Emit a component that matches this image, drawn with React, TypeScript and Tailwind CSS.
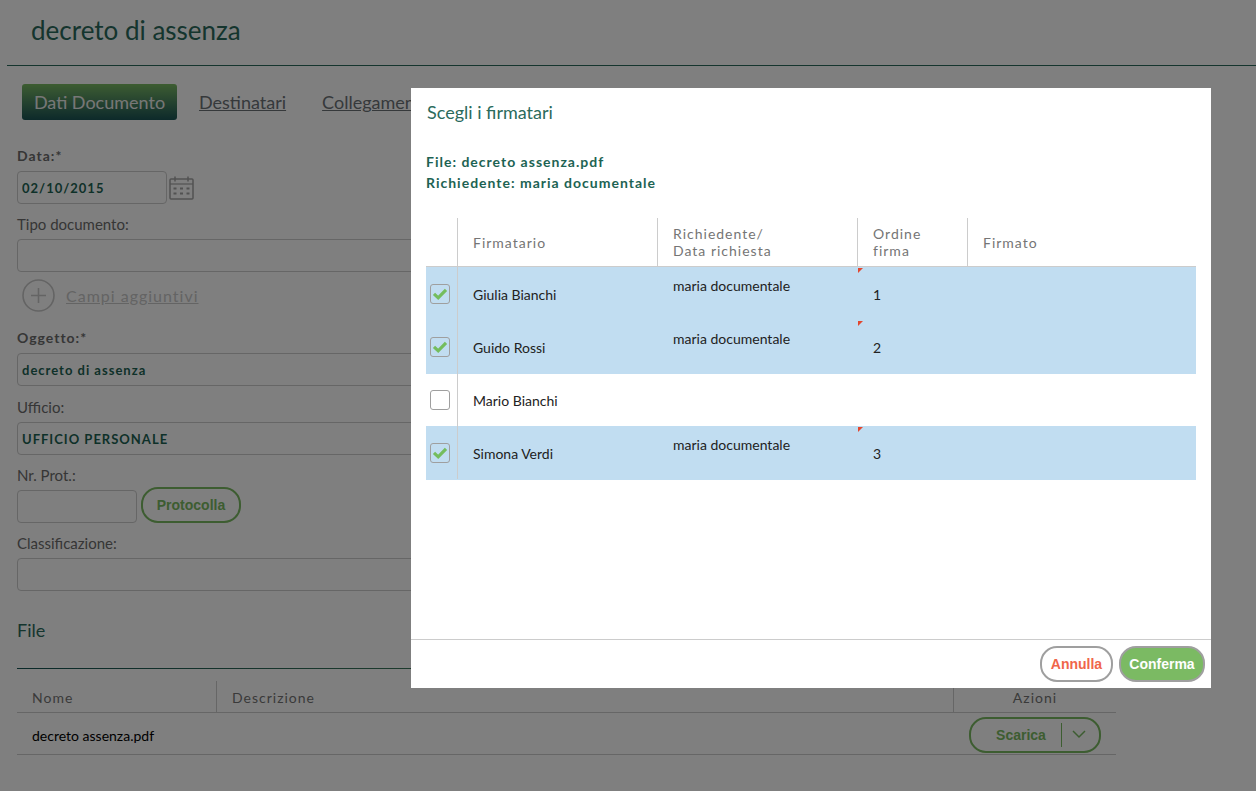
import React, { ChangeEvent, FC, ReactNode, useState } from 'react'

interface IFirmatario {
  id: number;
  nome: string;
  richiedente: string;
  ordine: string;
  scelto: boolean;
}

const elenco: IFirmatario[] = [
  { id: 1, nome: 'Giulia Bianchi', richiedente: 'maria documentale', ordine: '1', scelto: true },
  { id: 2, nome: 'Guido Rossi', richiedente: 'maria documentale', ordine: '2', scelto: true },
  { id: 3, nome: 'Mario Bianchi', richiedente: '', ordine: '', scelto: false },
  { id: 4, nome: 'Simona Verdi', richiedente: 'maria documentale', ordine: '3', scelto: true },
]

const inputClass = 'block h-[33px] rounded border border-[#ccc] bg-white px-1 text-[13px] font-bold tracking-[1px] text-[#1d6353]'
const buttonClass = "h-9 rounded-[17px] border-2 font-['Liberation_Sans',sans-serif] text-sm font-bold"

const CalendarIcon = () => (
  <svg width="26" height="24" viewBox="0 0 26 24" fill="none" stroke="#a4a4a4" aria-hidden="true">
    <rect x="1" y="3" width="23" height="20" rx="1" strokeWidth="1.5" />
    <path d="M1 8h23" strokeWidth="1.2" />
    <path d="M6 .5v5M19 .5v5" strokeWidth="1.5" />
    <path d="M4.500 12.500h3M11 12.500h3M17.500 12.500h3M4.500 17.500h3M11 17.500h3M17.500 17.500h3" strokeWidth="2" />
  </svg>
)

const PlusIcon = () => (
  <svg width="33" height="33" viewBox="0 0 33 33" fill="none" stroke="#c8c8c8" strokeWidth="1.6" aria-hidden="true">
    <circle cx="16.500" cy="16.500" r="15.500" />
    <path d="M9 16.500h15M16.500 9v15" />
  </svg>
)

interface FieldProps {
  id: string;
  label: string;
  required?: boolean;
  children: ReactNode;
}

const Field: FC<FieldProps> = ({ id, label, required, children }) => (
  <div>
    <label
      htmlFor={id}
      className={required
        ? 'mb-[5px] block text-sm leading-5 font-bold tracking-[1px] text-[#6c6c6c]'
        : 'mb-[5px] block text-[15px] leading-5 text-[#6c6c6c]'}
    >
      {label}
    </label>
    {children}
  </div>
)

const DocumentForm = () => {
  const [data, setData] = useState<string>('02/10/2015')
  const [oggetto, setOggetto] = useState<string>('decreto di assenza')
  const [ufficio, setUfficio] = useState<string>('UFFICIO PERSONALE')

  return (
    <form className="flex flex-col" onSubmit={(e) => e.preventDefault()}>
      <Field id="data" label="Data:*" required>
        <div className="flex items-center gap-0.5">
          <input
            id="data"
            type="text"
            value={data}
            className={`${inputClass} w-[150px]`}
            onChange={(e: ChangeEvent<HTMLInputElement>) => setData(e.target.value)}
          />
          <button type="button" aria-label="Apri calendario"><CalendarIcon /></button>
        </div>
      </Field>
      <div className="mt-2.5">
        <Field id="tipo" label="Tipo documento:">
          <input id="tipo" type="text" className={`${inputClass} w-full`} />
        </Field>
      </div>
      <a href="#campi" className="mt-[7px] ml-[5px] flex items-center gap-[11px] self-start text-base tracking-[1px] text-[#c8c8c8] underline">
        <PlusIcon />
        Campi aggiuntivi
      </a>
      <div className="mt-4">
        <Field id="oggetto" label="Oggetto:*" required>
          <input
            id="oggetto"
            type="text"
            value={oggetto}
            className={`${inputClass} w-full`}
            onChange={(e: ChangeEvent<HTMLInputElement>) => setOggetto(e.target.value)}
          />
        </Field>
      </div>
      <div className="mt-[11px]">
        <Field id="ufficio" label="Ufficio:">
          <input
            id="ufficio"
            type="text"
            value={ufficio}
            className={`${inputClass} w-full`}
            onChange={(e: ChangeEvent<HTMLInputElement>) => setUfficio(e.target.value)}
          />
        </Field>
      </div>
      <div className="mt-2.5">
        <Field id="prot" label="Nr. Prot.:">
          <div className="flex h-[33px] items-end gap-1">
            <input id="prot" type="text" className={`${inputClass} w-[120px]`} />
            <button type="button" className={`${buttonClass} w-[100px] border-[#7bba63] text-[#7bba63]`}>
              Protocolla
            </button>
          </div>
        </Field>
      </div>
      <div className="mt-2.5">
        <Field id="classificazione" label="Classificazione:">
          <input id="classificazione" type="text" className={`${inputClass} w-full`} />
        </Field>
      </div>
    </form>
  )
}

const FileTable = () => (
  <table className="mt-3 w-full table-fixed border-separate border-spacing-0 text-left">
    <colgroup>
      <col className="w-[200px]" />
      <col />
      <col className="w-[162px]" />
    </colgroup>
    <thead>
      <tr className="h-8 text-sm tracking-[1px] text-[#757575]">
        <th className="border-r border-b border-[#ccc] px-[15px] pt-0.5 font-normal">Nome</th>
        <th className="border-r border-b border-[#ccc] px-[15px] pt-0.5 font-normal">Descrizione</th>
        <th className="border-b border-[#ccc] pt-0.5 text-center font-normal">Azioni</th>
      </tr>
    </thead>
    <tbody>
      <tr className="h-[42px] text-sm">
        <td className="border-b border-[#ccc] px-[15px] pt-1">decreto assenza.pdf</td>
        <td className="border-b border-[#ccc]"></td>
        <td className="border-b border-[#ccc] pt-0.5 pl-[15px]">
          <div className="flex h-9 w-[132px] items-center rounded-[17px] border-2 border-[#7bba63] text-[#7bba63]">
            <button type="button" className="flex-1 pl-2.5 font-['Liberation_Sans',sans-serif] text-sm font-bold">
              Scarica
            </button>
            <button type="button" aria-label="Altre azioni" className="flex h-6 w-[38px] items-center border-l border-[#7bba63] pl-2.5">
              <svg width="14" height="9" viewBox="0 0 14 9" fill="none" stroke="currentColor" strokeWidth="1.5" aria-hidden="true">
                <path d="M1 1l6 6 6-6" />
              </svg>
            </button>
          </div>
        </td>
      </tr>
    </tbody>
  </table>
)

const FirmatariDialog = () => {
  const [firmatari, setFirmatari] = useState<IFirmatario[]>(elenco)

  const toggle = (id: number) => {
    setFirmatari(firmatari.map((f) => f.id === id ? { ...f, scelto: !f.scelto } : f))
  }

  return (
    <div role="dialog" aria-modal="true" aria-labelledby="titolo" className="flex min-h-[600px] w-full max-w-[800px] flex-col bg-white">
      <h2 id="titolo" className="px-4 pt-3 text-lg leading-6 text-[#2b6b5c]">Scegli i firmatari</h2>
      <div className="flex-1 px-[15px] pt-[27px]">
        <p className="text-sm leading-[21px] font-bold tracking-[1px] text-[#1d6353]">File: decreto assenza.pdf</p>
        <p className="text-sm leading-[21px] font-bold tracking-[1px] text-[#1d6353]">Richiedente: maria documentale</p>
        <table className="mt-[25px] w-full table-fixed border-separate border-spacing-0 text-left">
          <colgroup>
            <col className="w-8" />
            <col className="w-[200px]" />
            <col className="w-[200px]" />
            <col className="w-[110px]" />
            <col />
          </colgroup>
          <thead>
            <tr className="h-[49px] text-sm leading-[17px] tracking-[1px] text-[#757575]">
              <th className="border-r border-b border-[#ccc]"></th>
              <th className="border-r border-b border-[#ccc] px-[15px] font-normal">Firmatario</th>
              <th className="border-r border-b border-[#ccc] px-[15px] font-normal">Richiedente/<br />Data richiesta</th>
              <th className="border-r border-b border-[#ccc] px-[15px] font-normal">Ordine<br />firma</th>
              <th className="border-b border-[#ccc] px-[15px] font-normal">Firmato</th>
            </tr>
          </thead>
          <tbody>
            {firmatari.map((f) => (
              <tr key={f.id} className={f.scelto ? 'h-[53px] bg-[#c1ddf1] text-sm text-[#222] shadow-[0_1px_#c1ddf1]' : 'h-[53px] text-sm text-[#222]'}>
                <td className="border-r border-[#ccc]">
                  <div className="relative ml-1 size-5">
                    <input
                      type="checkbox"
                      id={`firmatario-${f.id}`}
                      checked={f.scelto}
                      className="block size-5 appearance-none rounded-[3px] border border-[#9f9f9f]"
                      onChange={() => toggle(f.id)}
                    />
                    {f.scelto && (
                      <svg className="pointer-events-none absolute inset-0" width="20" height="20" viewBox="0 0 20 20" fill="none" stroke="#74bd5d" strokeWidth="3.200" aria-hidden="true">
                        <path d="M4 9.800l4.200 4L16 5.800" />
                      </svg>
                    )}
                  </div>
                </td>
                <td className="px-[15px] pt-0.5"><label htmlFor={`firmatario-${f.id}`}>{f.nome}</label></td>
                <td className="px-[15px] pt-[9px] align-top">{f.richiedente}</td>
                <td className="relative px-[15px] pt-0.5">
                  {f.ordine && (
                    <svg className="absolute top-px left-0" width="5" height="5" viewBox="0 0 5 5" fill="#e2472f" aria-hidden="true">
                      <path d="M0 0h5L0 5z" />
                    </svg>
                  )}
                  {f.ordine}
                </td>
                <td></td>
              </tr>
            ))}
          </tbody>
        </table>
      </div>
      <div className="flex justify-end gap-1.5 border-t border-[#ccc] p-1.5">
        <button type="button" className={`${buttonClass} w-[73px] border-[#9f9f9f] bg-white text-[#f0664a]`}>Annulla</button>
        <button type="button" className={`${buttonClass} w-[86px] border-[#9f9f9f] bg-[#7bba63] text-white`}>Conferma</button>
      </div>
    </div>
  )
}

export default function App() {
  return (
    <div className="min-h-screen bg-white font-[Lato,sans-serif] text-black">
      <header className="ml-[7px] border-b border-[#2b6b5c] px-6 pt-3 pb-4">
        <h1 className="text-[26px] leading-[37px] text-[#2b6b5c]">decreto di assenza</h1>
      </header>
      <main className="pt-[18px] pr-[140px] pl-[17px]">
        <nav className="flex h-9 items-center pl-[5px] text-lg text-[#6c7277]">
          <a href="#dati" className="flex h-9 w-[155px] items-center justify-center rounded-[3px] bg-linear-to-b from-[#7bba63] to-[#1a5454] text-[#eee]">
            Dati Documento
          </a>
          <a href="#destinatari" className="ml-[22px] underline">Destinatari</a>
          <a href="#collegamenti" className="ml-9 underline">Collegamenti</a>
        </nav>
        <div className="mt-[26px]">
          <DocumentForm />
        </div>
        <h2 className="mt-[27px] text-lg leading-6 text-[#2b6b5c]">File</h2>
        <div className="mt-[26px] h-px bg-linear-to-r from-[#155352] to-[#7bba63]"></div>
        <FileTable />
      </main>
      <div className="fixed inset-0 flex items-start justify-end bg-black/50 pt-[88px] pr-[45px]">
        <FirmatariDialog />
      </div>
    </div>
  )
}
